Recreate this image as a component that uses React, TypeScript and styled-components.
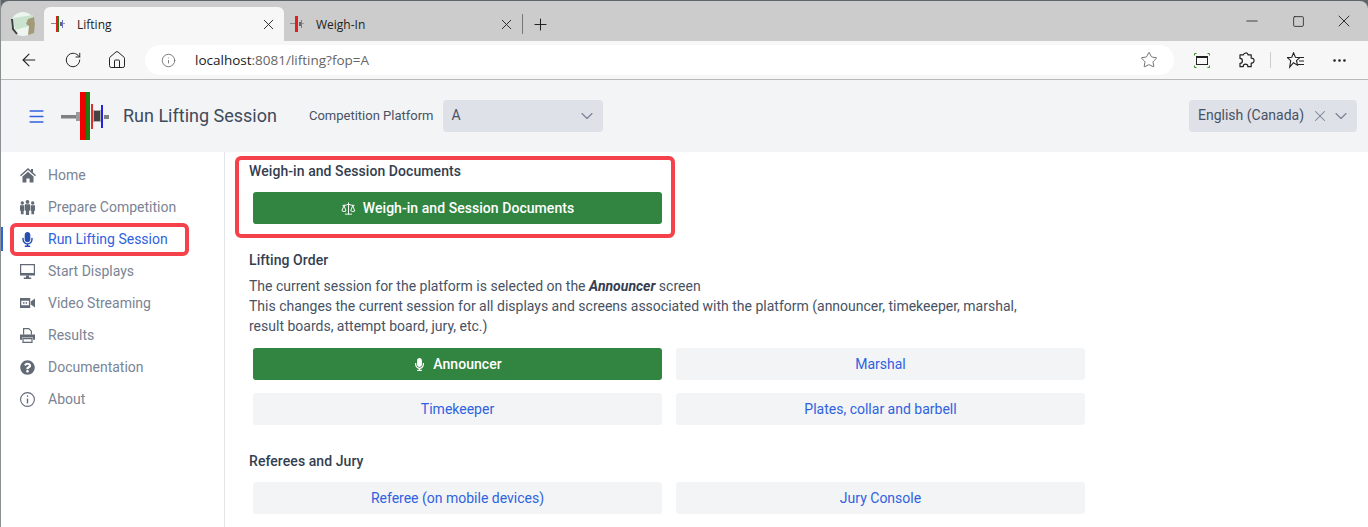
import styled, { createGlobalStyle } from 'styled-components';
import { ReactNode } from 'react';
import { FaMicrophone, FaQuestionCircle } from 'react-icons/fa';
import { ArrowLeft, ChevronDown, Home, Info, Menu, Minus, MoreHorizontal, Plus, RotateCw, Scale, Square, Star, X } from 'lucide-react';

const GlobalStyle = createGlobalStyle`
    html, body {
        margin: 0;
        padding: 0;
        height: 527px;
        overflow: hidden;
        background: #ffffff;
        font-family: Roboto, "Liberation Sans", sans-serif;
    }
`;

const BigLogo = () => (
    <svg width="48" height="52" viewBox="0 0 48 52">
        <rect x="0" y="25" width="15" height="3.5" fill="#808080" />
        <rect x="15" y="22" width="4" height="9" fill="#9a9a9a" />
        <rect x="19" y="2" width="6" height="48" fill="#f00000" />
        <rect x="25" y="2" width="4" height="48" fill="#1f7a10" />
        <rect x="30" y="14" width="2" height="25" fill="#d93030" />
        <rect x="32" y="20" width="8" height="12" fill="#b0b0b0" />
        <rect x="33" y="21" width="6" height="10" fill="#444444" />
        <rect x="40" y="15" width="2" height="23" fill="#2222e0" />
        <rect x="43" y="25" width="5" height="4" fill="#808080" />
    </svg>
);

const TabLogo = () => (
    <svg width="14" height="16" viewBox="0 0 14 16">
        <rect x="0" y="7" width="5" height="1" fill="#888888" />
        <rect x="5" y="0" width="2" height="16" fill="#e02020" />
        <rect x="7" y="0" width="1" height="16" fill="#2a7a20" />
        <rect x="9" y="6" width="2" height="4" fill="#666666" />
        <rect x="11" y="4" width="1" height="8" fill="#7070d8" />
        <rect x="12" y="7" width="2" height="1" fill="#999999" />
    </svg>
);

const HomeIcon = () => (
    <svg width="16" height="15" viewBox="0 0 16 15" fill="currentColor">
        <path d="M8 0L0 7.2l.9 1L8 2l7.1 6.2.9-1L13 4.5V1h-2v1.8z" />
        <path d="M2.5 8.6L8 3.8l5.5 4.8v5.9H9.6v-4H6.4v4H2.5z" />
    </svg>
);

const PeopleIcon = () => (
    <svg width="15" height="15" viewBox="0 0 15 15" fill="currentColor">
        <circle cx="2.3" cy="3" r="1.7" />
        <circle cx="7.5" cy="1.9" r="1.9" />
        <circle cx="12.7" cy="3" r="1.7" />
        <path d="M0 5.2h4.4v5.4l-.8.3v3.3H.9v-3.3l-.9-.3z" />
        <path d="M5 4.2h5v6.2l-.9.3V15H5.9v-4.3L5 10.4z" />
        <path d="M10.6 5.2H15v5.4l-.9.3v3.3h-2.7v-3.3l-.8-.3z" />
    </svg>
);

const DesktopIcon = () => (
    <svg width="15" height="15" viewBox="0 0 15 15" fill="currentColor">
        <path fillRule="evenodd" d="M0 0h15v11.5H0zM1.2 1.2v7.9h12.6V1.2z" />
        <path d="M6 11.5h3v2h2.2V15H3.8v-1.5H6z" />
    </svg>
);

const VideoIcon = () => (
    <svg width="15" height="10" viewBox="0 0 15 10" fill="currentColor">
        <path fillRule="evenodd" d="M0 0h10.2v10H0zM1.3 2.8v4.4h7.6V2.8z" />
        <rect x="3" y="4.2" width="1.5" height="1.5" />
        <rect x="5.6" y="4.2" width="1.5" height="1.5" />
        <path d="M10.8 3.4L15 .6v8.8l-4.2-2.8z" />
    </svg>
);

const PrintIcon = () => (
    <svg width="15" height="15" viewBox="0 0 15 15" fill="currentColor">
        <path d="M3.6 6.5V.6h5.2l2.6 2.6v3.3" fill="none" stroke="currentColor" strokeWidth="1.2" />
        <path d="M0 6.5h15v5.2h-2V9.6H2v2.1H0z" />
        <path d="M3 10.6h9v3.8H3z" fill="none" stroke="currentColor" strokeWidth="1.2" />
    </svg>
);

const AboutIcon = () => (
    <svg width="15" height="15" viewBox="0 0 15 15" fill="none" stroke="currentColor" strokeWidth="1.1">
        <circle cx="7.5" cy="7.5" r="6.9" />
        <path d="M7.5 6.6v4.8" strokeWidth="1.4" />
        <circle cx="7.5" cy="4.1" r=".8" fill="currentColor" stroke="none" />
    </svg>
);

const ProfileBadge = () => (
    <svg width="28" height="28" viewBox="0 0 28 28">
        <circle cx="14" cy="14" r="12" fill="#eef4ee" />
        <path d="M4 8l20-3v10L6 20z" fill="#c9e3cf" />
        <path d="M19 25l1-9-3-2 2-5 6-2 1 7-1 9z" fill="#a39a7a" />
        <path d="M3 9l1 10 4 5" stroke="#3c4040" strokeWidth="2" fill="none" />
    </svg>
);

const CaptureIcon = () => (
    <svg width="16" height="15" viewBox="0 0 16 15" fill="none">
        <rect x="2.5" y="3.5" width="11" height="8" stroke="#222222" />
        <rect x="2.5" y="3.5" width="11" height="1.5" fill="#222222" />
        <path d="M.5 2.5v-2h2M13.5.5h2v2M.5 12.5v2h2M13.5 14.5h2v-2" stroke="#3d8c2a" />
    </svg>
);

const ExtensionIcon = () => (
    <svg width="17" height="17" viewBox="0 0 17 17" fill="none" stroke="#222222" strokeWidth="1.2" strokeLinejoin="round">
        <path d="M7 1.2c1.6-.8 3 .3 3 1.6h3.2v3.4c1.7-.3 2.9.8 2.9 2.4s-1.2 2.8-2.9 2.5v3.6H9.8c.3-1.7-1-2.6-2.3-2.6S5 13 5.3 14.7H2v-3.4c1.6 0 2.4-1.1 2.4-2.4S3.6 6.4 2 6.4V2.8h3.4c0-.6.6-1.1 1.6-1.6z" />
    </svg>
);

const FavoritesIcon = () => (
    <svg width="17" height="17" viewBox="0 0 17 17" fill="none" stroke="#222222" strokeWidth="1.1">
        <path d="M6.5.8l1.9 4.4 4.4.4-3.3 3.1 1 4.4-4-2.4-3.8 4.4 1-6.4L.4 5.6l4.4-.4z" />
        <path d="M11.5 5.5H17M12 9h5M10.5 12.5H17" />
    </svg>
);

const items: { label: string; icon: ReactNode }[] = [
    { label: 'Home', icon: <HomeIcon /> },
    { label: 'Prepare Competition', icon: <PeopleIcon /> },
    { label: 'Run Lifting Session', icon: <FaMicrophone size={15} /> },
    { label: 'Start Displays', icon: <DesktopIcon /> },
    { label: 'Video Streaming', icon: <VideoIcon /> },
    { label: 'Results', icon: <PrintIcon /> },
    { label: 'Documentation', icon: <FaQuestionCircle size={15} /> },
    { label: 'About', icon: <AboutIcon /> },
];

export default function App() {
    return (
        <Page>
            <GlobalStyle />
            <TabStrip>
                <Profile>
                    <ProfileBadge />
                </Profile>
                <Tab $active>
                    <TabLogo />
                    <TabTitle>Lifting</TabTitle>
                    <X size={17} strokeWidth={1.3} />
                </Tab>
                <Tab>
                    <TabLogo />
                    <TabTitle>Weigh-In</TabTitle>
                    <X size={17} strokeWidth={1.3} />
                </Tab>
                <TabDivider />
                <NewTab>
                    <Plus size={19} strokeWidth={1.3} />
                </NewTab>
                <WindowControls>
                    <Minus size={18} strokeWidth={1.1} />
                    <Square size={13} strokeWidth={1.5} />
                    <X size={20} strokeWidth={1.1} />
                </WindowControls>
            </TabStrip>

            <Toolbar>
                <NavIcons>
                    <ArrowLeft size={20} strokeWidth={1.3} />
                    <RotateCw size={18} strokeWidth={1.3} />
                    <Home size={20} strokeWidth={1.2} />
                </NavIcons>
                <AddressBar>
                    <Info size={15} strokeWidth={1.2} color="#555555" />
                    <Url>
                        <b>localhost</b>:8081/lifting?fop=A
                    </Url>
                    <Star size={18} strokeWidth={1.1} color="#555555" />
                </AddressBar>
                <ToolIcons>
                    <CaptureIcon />
                    <ExtensionSlot>
                        <ExtensionIcon />
                    </ExtensionSlot>
                    <ToolDivider />
                    <FavoritesIcon />
                    <MoreSlot>
                        <MoreHorizontal size={17} strokeWidth={1.8} />
                    </MoreSlot>
                </ToolIcons>
            </Toolbar>

            <Header>
                <MenuButton>
                    <Menu size={19} strokeWidth={2} />
                </MenuButton>
                <BigLogo />
                <AppTitle>Run Lifting Session</AppTitle>
                <FieldLabel>Competition Platform</FieldLabel>
                <PlatformSelect>
                    <span>A</span>
                    <ChevronDown size={20} strokeWidth={1.4} color="#7b8494" />
                </PlatformSelect>
                <LanguageSelect>
                    <span>English (Canada)</span>
                    <LangIcons>
                        <X size={18} strokeWidth={1.4} />
                        <ChevronDown size={20} strokeWidth={1.4} />
                    </LangIcons>
                </LanguageSelect>
            </Header>

            <Body>
                <Sidebar>
                    {items.map((item) => (
                        <NavItem key={item.label} $active={item.label === 'Run Lifting Session'}>
                            <NavIcon>{item.icon}</NavIcon>
                            {item.label}
                        </NavItem>
                    ))}
                    <NavHighlight />
                </Sidebar>

                <Main>
                    <DocsHighlight />
                    <SectionTitle>Weigh-in and Session Documents</SectionTitle>
                    <ButtonGrid $top={12}>
                        <Action $primary>
                            <Scale size={15} strokeWidth={1.5} />
                            Weigh-in and Session Documents
                        </Action>
                    </ButtonGrid>

                    <LiftingTitle>Lifting Order</LiftingTitle>
                    <Note>
                        The current session for the platform is selected on the <em>Announcer</em> screen
                        <br />
                        This changes the current session for all displays and screens associated with the platform (announcer, timekeeper, marshal,
                        <br />
                        result boards, attempt board, jury, etc.)
                    </Note>
                    <ButtonGrid>
                        <Action $primary>
                            <FaMicrophone size={13} />
                            Announcer
                        </Action>
                        <Action>Marshal</Action>
                        <Action>Timekeeper</Action>
                        <Action>Plates, collar and barbell</Action>
                    </ButtonGrid>

                    <RefereeTitle>Referees and Jury</RefereeTitle>
                    <ButtonGrid $top={12}>
                        <Action>Referee (on mobile devices)</Action>
                        <Action>Jury Console</Action>
                    </ButtonGrid>
                </Main>
            </Body>
        </Page>
    );
}

const Page = styled.div`
    width: 1368px;
    height: 527px;
    box-sizing: border-box;
    border-left: 1px solid #8a8f92;
    background: #5f6669;
    display: flex;
    flex-direction: column;
    overflow: hidden;
`;

const TabStrip = styled.div`
    height: 40px;
    margin-top: 1px;
    flex: none;
    box-sizing: border-box;
    background: #cccccc;
    border-radius: 8px 8px 0 0;
    display: flex;
    align-items: flex-end;
    padding-left: 8px;
`;

const Profile = styled.div`
    width: 28px;
    height: 34px;
    margin-right: 7px;
    display: flex;
    align-items: center;
`;

const Tab = styled.div<{ $active?: boolean }>`
    width: ${(p) => (p.$active ? '240px' : '238px')};
    height: 34px;
    box-sizing: border-box;
    padding: 0 7px 0 ${(p) => (p.$active ? '7px' : '6px')};
    background: ${(p) => (p.$active ? '#f7f7f7' : 'transparent')};
    border-radius: 6px 6px 0 0;
    display: flex;
    align-items: center;
    color: #222222;
`;

const TabTitle = styled.span`
    flex: 1;
    margin-left: 12px;
    font-family: "Open Sans", Roboto, sans-serif;
    font-size: 12px;
    color: #222222;
`;

const TabDivider = styled.div`
    width: 1px;
    height: 20px;
    background: #777777;
    margin: 0 0 7px 0;
`;

const NewTab = styled.div`
    margin: 0 0 7px 8px;
    display: flex;
    color: #222222;
`;

const WindowControls = styled.div`
    margin: 0 1px 3px auto;
    width: 138px;
    height: 34px;
    display: grid;
    grid-template-columns: repeat(3, 46px);
    align-items: center;
    justify-items: center;
    color: #222222;
`;

const Toolbar = styled.div`
    height: 39px;
    flex: none;
    box-sizing: border-box;
    background: #f7f7f7;
    border-bottom: 1px solid #b8b8b8;
    display: flex;
    align-items: center;
`;

const NavIcons = styled.div`
    width: 144px;
    padding-left: 18px;
    box-sizing: border-box;
    display: flex;
    gap: 25px;
    align-items: center;
    color: #222222;
`;

const AddressBar = styled.div`
    width: 1029px;
    height: 30px;
    box-sizing: border-box;
    background: #ffffff;
    border-radius: 15px;
    padding: 0 16px 0 16px;
    display: flex;
    align-items: center;
`;

const Url = styled.span`
    flex: 1;
    margin-left: 19px;
    font-family: "Open Sans", Roboto, sans-serif;
    font-size: 13.5px;
    color: #666666;

    b {
        font-weight: 400;
        color: #1a1a1a;
    }
`;

const ToolIcons = styled.div`
    flex: 1;
    display: flex;
    align-items: center;
    padding-left: 20px;
    color: #222222;
`;

const ExtensionSlot = styled.span`
    display: flex;
    margin-left: 28px;
`;

const MoreSlot = styled.span`
    display: flex;
    margin-left: 27px;
`;

const ToolDivider = styled.div`
    width: 1px;
    height: 16px;
    margin: 0 16px 0 15px;
    background: #cccccc;
`;

const Header = styled.header`
    height: 72px;
    flex: none;
    box-sizing: border-box;
    background: #f3f4f6;
    padding: 0 11px 0 26px;
    display: flex;
    align-items: center;
`;

const MenuButton = styled.div`
    display: flex;
    color: #2f62e0;
    margin-right: 15px;
`;

const AppTitle = styled.h1`
    margin: 0 32px 2px 14px;
    font-size: 18px;
    font-weight: 400;
    color: #3f4a5c;
`;

const FieldLabel = styled.span`
    font-size: 13px;
    color: #475264;
    margin: 0 10px 2px 0;
`;

const PlatformSelect = styled.div`
    width: 160px;
    height: 32px;
    box-sizing: border-box;
    background: #dee1e8;
    border-radius: 4px;
    padding: 0 6px 0 8px;
    display: flex;
    align-items: center;
    justify-content: space-between;
    font-size: 14px;
    color: #475264;

    span:first-child {
        padding-bottom: 2px;
    }
`;

const LanguageSelect = styled(PlatformSelect)`
    width: 168px;
    margin-left: auto;
    padding-left: 9px;
`;

const LangIcons = styled.span`
    display: flex;
    align-items: center;
    gap: 2px;
    color: #7b8494;
`;

const Body = styled.div`
    flex: 1;
    display: flex;
    min-height: 0;
    background: #ffffff;
`;

const Sidebar = styled.nav`
    position: relative;
    width: 224px;
    flex: none;
    box-sizing: border-box;
    border-right: 1px solid #e3e5e8;
    padding-top: 7px;
`;

const NavItem = styled.div<{ $active?: boolean }>`
    position: relative;
    height: 32px;
    display: flex;
    align-items: center;
    padding-left: 19px;
    font-size: 14px;
    color: ${(p) => (p.$active ? '#2f62e0' : '#7a8494')};

    &::before {
        content: '';
        display: ${(p) => (p.$active ? 'block' : 'none')};
        position: absolute;
        left: 0;
        top: 4px;
        width: 2px;
        height: 24px;
        background: #2f62e0;
    }
`;

const NavIcon = styled.span`
    width: 28px;
    display: flex;
    align-items: center;
    filter: brightness(0.8);
`;

const NavHighlight = styled.div`
    position: absolute;
    left: 9px;
    top: 71px;
    width: 179px;
    height: 33px;
    box-sizing: border-box;
    border: 4px solid #f4414a;
    border-radius: 6px;
`;

const DocsHighlight = styled.div`
    position: absolute;
    left: 10px;
    top: 4px;
    width: 440px;
    height: 82px;
    box-sizing: border-box;
    border: 4px solid #f4414a;
    border-radius: 6px;
`;

const Main = styled.main`
    position: relative;
    flex: 1;
    padding: 11px 0 0 24px;
    color: #475264;
`;

const SectionTitle = styled.h3`
    margin: 0;
    height: 17px;
    line-height: 17px;
    font-size: 14px;
    font-weight: 500;
    letter-spacing: 0.07px;
    color: #333e50;
`;

const LiftingTitle = styled(SectionTitle)`
    margin-top: 28px;
`;

const RefereeTitle = styled(SectionTitle)`
    margin-top: 28px;
`;

const Note = styled.p`
    margin: 7px 0 12px;
    font-size: 14px;
    line-height: 20px;
    color: #475264;

    em {
        font-weight: 700;
        color: #333e50;
    }
`;

const ButtonGrid = styled.div<{ $top?: number }>`
    width: 832px;
    margin: ${(p) => p.$top ?? 0}px 0 0 4px;
    display: grid;
    grid-template-columns: 409px 409px;
    column-gap: 14px;
    row-gap: 13px;
`;

const Action = styled.div<{ $primary?: boolean }>`
    height: 32px;
    border-radius: 3px;
    background: ${(p) => (p.$primary ? '#328540' : '#f3f4f6')};
    color: ${(p) => (p.$primary ? '#ffffff' : '#2f62e0')};
    font-size: 14px;
    font-weight: ${(p) => (p.$primary ? 500 : 400)};
    letter-spacing: ${(p) => (p.$primary ? '0.05px' : '0')};
    display: flex;
    align-items: center;
    justify-content: center;
    gap: 7px;
`;
